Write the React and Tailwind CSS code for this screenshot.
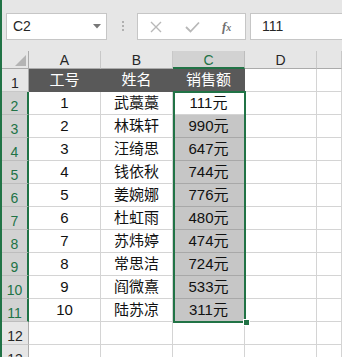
import React from "react";

const rows = [
  ["1", "武藁藁", "111元"],
  ["2", "林珠轩", "990元"],
  ["3", "汪绮思", "647元"],
  ["4", "钱依秋", "744元"],
  ["5", "姜婉娜", "776元"],
  ["6", "杜虹雨", "480元"],
  ["7", "苏炜婷", "474元"],
  ["8", "常思洁", "724元"],
  ["9", "阎微熹", "533元"],
  ["10", "陆苏凉", "311元"],
];

const font = "font-['Liberation_Sans','Noto_Sans_CJK_SC',sans-serif]";

function RowHead({ n, active }) {
  return (
    <div
      className={
        active
          ? "h-[23px] flex items-center justify-center pt-[6px] bg-[#d2d2d2] text-[#217346] border-b border-[#bdbdbd] border-r-2 border-r-[#217346] text-[14px]"
          : "h-[23px] flex items-center justify-center pt-[6px] bg-[#e6e6e6] text-[#262626] border-b border-[#c8c8c8] border-r border-r-[#ababab] text-[14px]"
      }
    >
      {n}
    </div>
  );
}

function Cell({ children, kind }) {
  const base = "h-[23px] flex items-center justify-center text-[15px] border-r border-b ";
  if (kind === "head") return <div className={base + "bg-[#595959] text-white border-[#595959]"}>{children}</div>;
  if (kind === "sel") return <div className={base + "bg-[#c6c6c6] text-[#111] border-[#a8a8a8]"}>{children}</div>;
  return <div className={base + "bg-white text-[#111] border-[#d4d4d4]"}>{children}</div>;
}

function ColHead({ label, active }) {
  return (
    <div
      className={
        active
          ? "h-[18px] flex items-center justify-center pt-[2px] bg-[#d2d2d2] text-[#217346] text-[14px] border-r border-r-[#bdbdbd] border-b-2 border-b-[#217346]"
          : "h-[18px] flex items-center justify-center pt-[2px] bg-[#e6e6e6] text-[#262626] text-[14px] border-r border-r-[#c8c8c8] border-b border-b-[#ababab]"
      }
    >
      {label}
    </div>
  );
}

export default function App() {
  return (
    <div className={`relative w-[342px] h-[357px] overflow-hidden bg-white border-l-2 border-[#217346] ${font}`}>
      {/* formula bar */}
      <div className="h-[51px] bg-[#e6e6e6] flex items-start pt-[13px]">
        <div className="ml-[4px] w-[101px] h-[27px] bg-white border border-[#c6c6c6] flex items-center justify-between pl-[6px] pr-[5px]">
          <span className="text-[14px] text-[#262626]">C2</span>
          <svg width="8" height="5" viewBox="0 0 8 5">
            <path d="M0 0 H8 L4 4.5 Z" fill="#777" />
          </svg>
        </div>
        <div className="ml-[15px] mt-[8px] flex flex-col gap-[2px]">
          <div className="w-[2px] h-[2px] bg-[#b0b0b0]" />
          <div className="w-[2px] h-[2px] bg-[#b0b0b0]" />
          <div className="w-[2px] h-[2px] bg-[#b0b0b0]" />
        </div>
        <div className="ml-[13px] w-[109px] h-[27px] bg-white border border-[#c6c6c6] flex items-center">
          <svg className="ml-[12px]" width="12" height="12" viewBox="0 0 12 12">
            <path d="M1 1 L11 11 M11 1 L1 11" stroke="#b8b8b8" strokeWidth="1.4" />
          </svg>
          <svg className="ml-[23px]" width="15" height="12" viewBox="0 0 15 12">
            <path d="M1 6 L5.5 10.5 L14 1.5" stroke="#b8b8b8" strokeWidth="1.8" fill="none" />
          </svg>
          <span className="ml-[22px] text-[13px] italic font-bold text-[#707070] font-['Liberation_Serif',serif]">
            f<span className="text-[10px]">x</span>
          </span>
        </div>
        <div className="ml-[4px] flex-1 h-[27px] bg-white border border-r-0 border-[#c6c6c6] flex items-center pl-[11px]">
          <span className="text-[14px] text-[#262626]">111</span>
        </div>
      </div>

      {/* sheet */}
      <div className="grid grid-cols-[27px_72px_72px_72px_72px_25px]">
        <div className="h-[18px] bg-[#e6e6e6] border-r border-b border-[#ababab] flex items-end justify-end pr-[2px] pb-[2px]">
          <svg width="11" height="11" viewBox="0 0 11 11">
            <path d="M11 0 V11 H0 Z" fill="#b4b4b4" />
          </svg>
        </div>
        <ColHead label="A" />
        <ColHead label="B" />
        <ColHead label="C" active />
        <ColHead label="D" />
        <ColHead label="" />

        <RowHead n="1" />
        <Cell kind="head">工号</Cell>
        <Cell kind="head">姓名</Cell>
        <Cell kind="head">销售额</Cell>
        <Cell />
        <Cell />

        {rows.map((r, i) => (
          <React.Fragment key={r[0]}>
            <RowHead n={String(i + 2)} active />
            <Cell>{r[0]}</Cell>
            <Cell>{r[1]}</Cell>
            <Cell kind={i === 0 ? undefined : "sel"}>{r[2]}</Cell>
            <Cell />
            <Cell />
          </React.Fragment>
        ))}

        {["12", "13"].map((n) => (
          <React.Fragment key={n}>
            <RowHead n={n} />
            <Cell />
            <Cell />
            <Cell />
            <Cell />
            <Cell />
          </React.Fragment>
        ))}
      </div>

      {/* selection outline + fill handle */}
      <div className="absolute left-[171px] top-[91px] w-[73px] h-[232px] border-2 border-[#217346] pointer-events-none" />
      <div className="absolute left-[241px] top-[319px] w-[7px] h-[7px] bg-[#217346] border border-white pointer-events-none" />
    </div>
  );
}
